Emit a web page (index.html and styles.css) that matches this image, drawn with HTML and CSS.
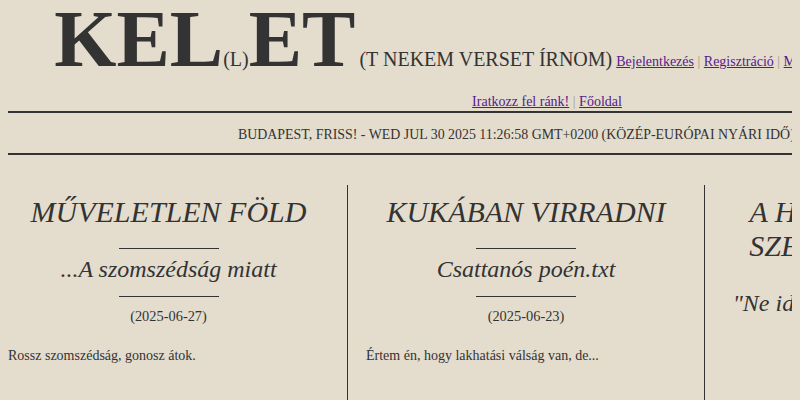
FILE: index.html
```html
<!DOCTYPE html>
<html lang="hu">
<head>
<meta charset="utf-8">
<title>KEL(L)ET</title>
<link rel="stylesheet" href="styles.css">
</head>
<body>
<div class="page">
  <header class="header">
    <div class="top-line">
      <span class="logo">KEL</span><span class="logo-small">(L)</span><span class="logo">ET</span>
      <span class="tagline">(T NEKEM VERSET ÍRNOM)</span>
      <nav class="nav"><a href="#">Bejelentkezés</a> <span class="sep">|</span> <a href="#">Regisztráció</a> <span class="sep">|</span> <a href="#">Minden vers</a> <span class="sep">|</span> <a href="#">Szerzők</a> <span class="sep">|</span> <a href="#">Kapcsolatok</a> <span class="sep">|</span> <a href="#">Rólunk</a></nav>
    </div>
    <div class="sub-line">
      <a href="#">Iratkozz fel ránk!</a> <span class="sep">|</span> <a href="#">Főoldal</a>
    </div>
  </header>
  <div class="ticker">BUDAPEST, FRISS! - WED JUL 30 2025 11:26:58 GMT+0200 (KÖZÉP-EURÓPAI NYÁRI IDŐ)</div>
  <main class="columns">
    <article class="col">
      <h2 class="title">MŰVELETLEN FÖLD</h2>
      <hr class="rule">
      <h3 class="subtitle">...A szomszédság miatt</h3>
      <hr class="rule rule-low">
      <div class="date">(2025-06-27)</div>
      <p class="lead">Rossz szomszédság, gonosz átok.</p>
    </article>
    <article class="col">
      <h2 class="title">KUKÁBAN VIRRADNI</h2>
      <hr class="rule">
      <h3 class="subtitle">Csattanós poén.txt</h3>
      <hr class="rule rule-low">
      <div class="date">(2025-06-23)</div>
      <p class="lead">Értem én, hogy lakhatási válság van, de...</p>
    </article>
    <article class="col">
      <h2 class="title">A HAJNALI KÖLTŐK SZERELMES VERSEI</h2>
      <hr class="rule">
      <h3 class="subtitle">"Ne idegeskedj, inkább írd meg szépen!"</h3>
      <hr class="rule rule-low">
      <div class="date">(2025-06-19)</div>
      <p class="lead">Egy régi dal, új szavakkal.</p>
    </article>
  </main>
</div>
</body>
</html>
```
FILE: styles.css
```css
html, body {
  background: #e4dccd;
}
body {
  margin: 0 8px;
  color: #333333;
  font-family: "Liberation Serif", "Times New Roman", serif;
  font-size: 16px;
}
.page {
  width: 1078px;
}
.header {
  text-align: center;
}
.top-line {
  white-space: nowrap;
  line-height: 78px;
  height: 78px;
}
.logo {
  font-size: 80px;
  font-weight: bold;
}
.logo-small {
  font-size: 20px;
}
.tagline {
  font-size: 20px;
}
.nav {
  display: inline;
  font-size: 14px;
}
a {
  color: #551a8b;
}
.sep {
  color: #a89a8a;
}
.sub-line {
  font-size: 14px;
  margin-top: 16px;
  height: 17px;
}
.ticker {
  margin: 0 -8px;
  border-top: 2px solid #333333;
  border-bottom: 2px solid #333333;
  padding: 14px 0 11px 238px;
  height: 15px;
  line-height: 15px;
  font-size: 13.9px;
  white-space: nowrap;
}
.columns {
  display: flex;
  margin-top: 30px;
  height: 240px;
}
.col {
  width: 320px;
  flex: none;
  padding: 10px 18px 0;
  border-left: 1px solid #333333;
  text-align: center;
}
.col:first-child {
  width: 321px;
  padding-left: 0;
  border-left: none;
}
.title {
  margin: 0;
  font-size: 30px;
  font-style: italic;
  font-weight: normal;
  line-height: 34px;
}
.rule {
  width: 100px;
  height: 1px;
  border: none;
  background: #333333;
  margin: 19px auto 6px;
}
.rule-low {
  margin: 13px auto 11px;
}
.subtitle {
  margin: 0;
  font-size: 24px;
  font-style: italic;
  font-weight: normal;
  line-height: 28px;
}
.date {
  font-size: 14.4px;
  line-height: 17px;
}
.lead {
  margin: 22px 0 0;
  text-align: left;
  font-size: 14px;
  line-height: 17px;
}
```
